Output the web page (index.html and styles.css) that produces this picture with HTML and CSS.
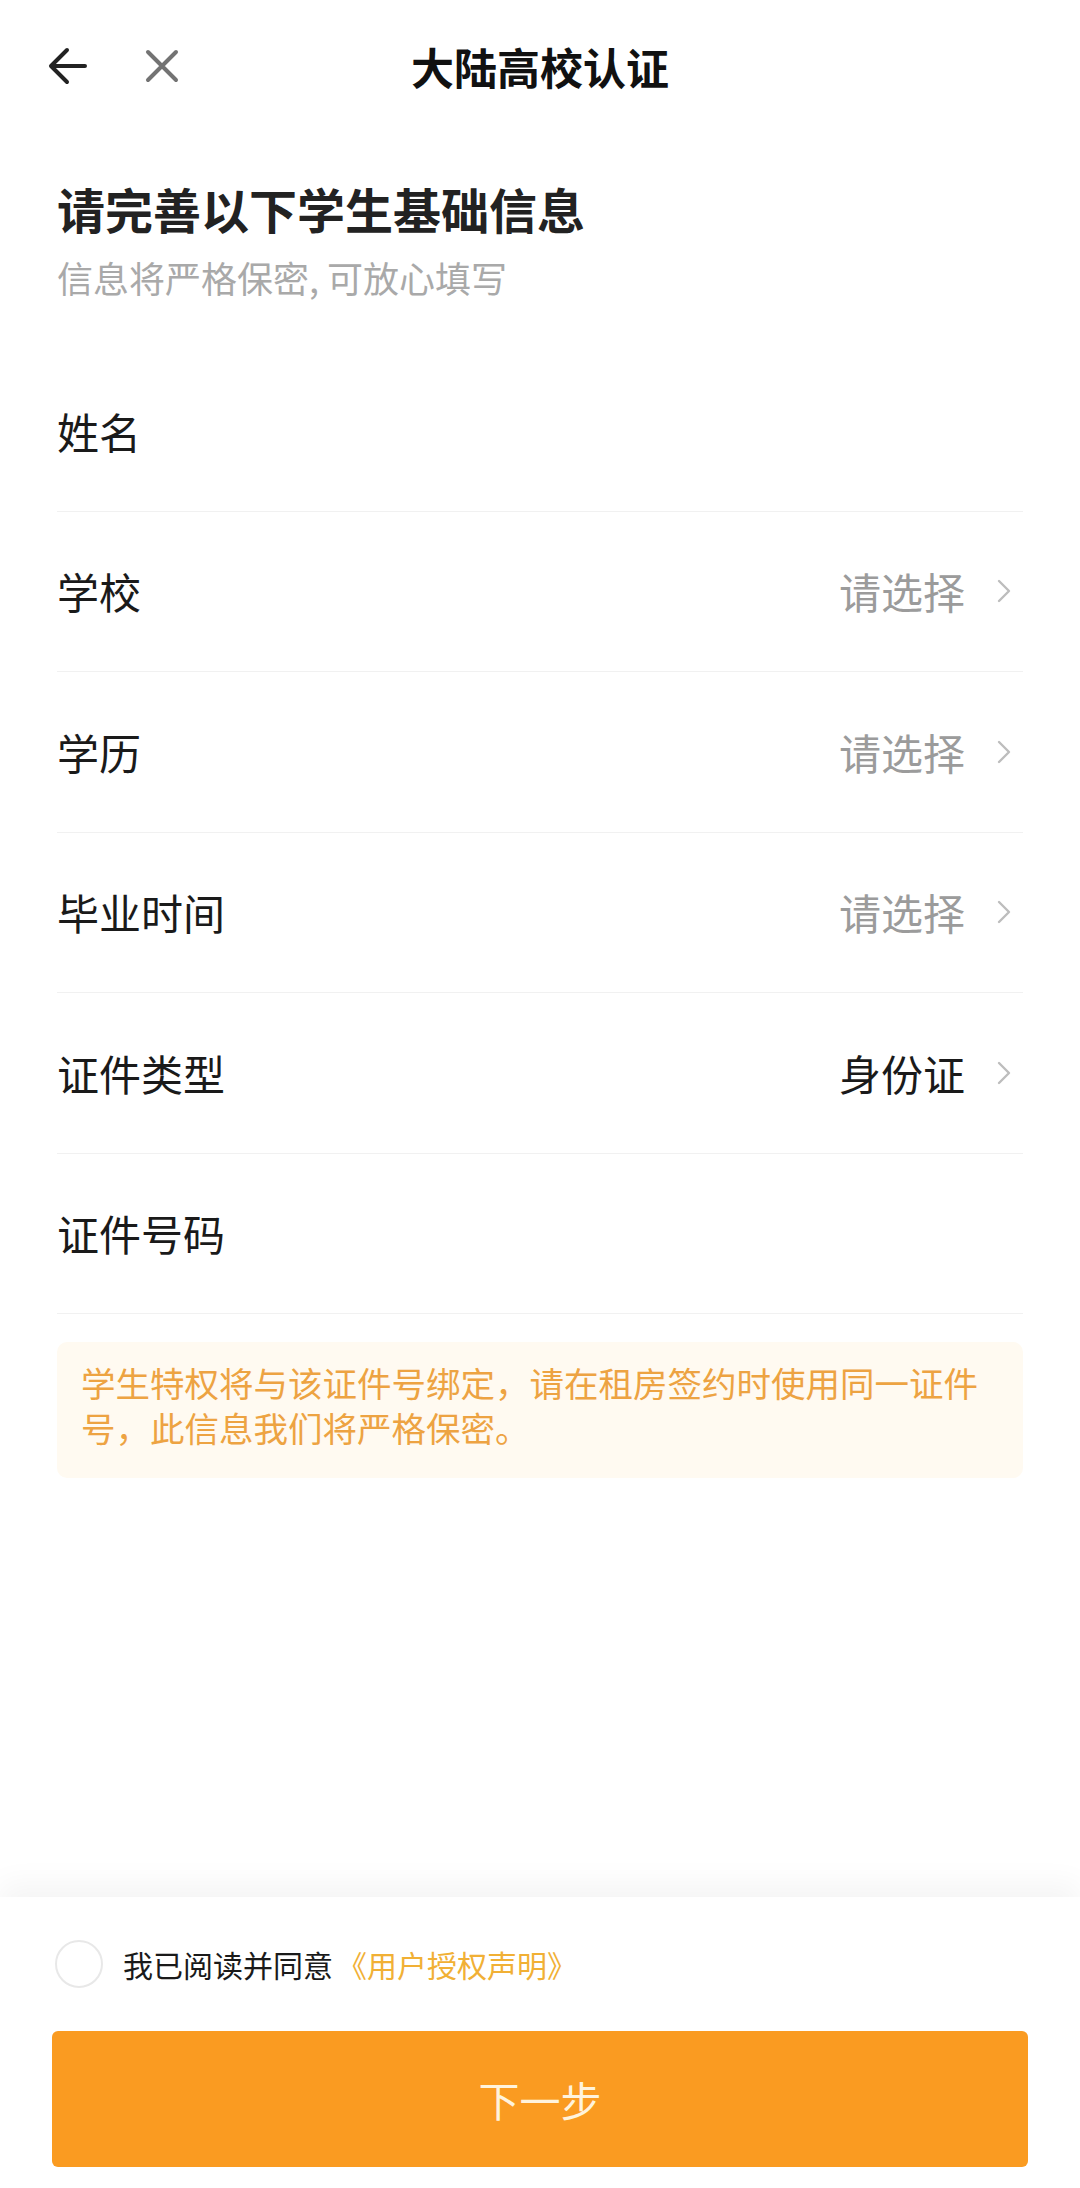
FILE: index.html
```html
<!DOCTYPE html>
<html lang="zh-CN">
<head>
    <meta charset="UTF-8">
    <meta name="viewport" content="width=device-width, initial-scale=1.0">
    <title>大陆高校认证</title>
    <link rel="stylesheet" href="styles.css">
</head>
<body>
    <!-- Top navigation -->
    <header class="nav-bar">
        <div class="nav-left">
            <button class="icon-button" aria-label="返回">
                <svg class="icon-back" viewBox="0 0 40 38" width="40" height="38">
                    <path d="M37 19H4M19 3L3 19l16 16" fill="none" stroke="#222" stroke-width="4" stroke-linecap="round" stroke-linejoin="round"/>
                </svg>
            </button>
            <button class="icon-button" aria-label="关闭">
                <svg class="icon-close" viewBox="0 0 34 34" width="34" height="34">
                    <path d="M3 3l28 28M31 3L3 31" fill="none" stroke="#737373" stroke-width="4" stroke-linecap="round"/>
                </svg>
            </button>
        </div>
        <h1 class="nav-title">大陆高校认证</h1>
        <div></div>
    </header>

    <main class="content">
        <div class="intro">
            <h2>请完善以下学生基础信息</h2>
            <p>信息将严格保密, 可放心填写</p>
        </div>

        <div class="form-list">
            <div class="form-row">
                <span class="row-label">姓名</span>
            </div>
            <div class="form-row">
                <span class="row-label">学校</span>
                <span class="row-value placeholder">请选择</span>
                <svg class="chevron" viewBox="0 0 14 24" width="14" height="24"><path d="M2 2l10 10L2 22" fill="none" stroke="#bdbdbd" stroke-width="2.4" stroke-linecap="round" stroke-linejoin="round"/></svg>
            </div>
            <div class="form-row">
                <span class="row-label">学历</span>
                <span class="row-value placeholder">请选择</span>
                <svg class="chevron" viewBox="0 0 14 24" width="14" height="24"><path d="M2 2l10 10L2 22" fill="none" stroke="#bdbdbd" stroke-width="2.4" stroke-linecap="round" stroke-linejoin="round"/></svg>
            </div>
            <div class="form-row">
                <span class="row-label">毕业时间</span>
                <span class="row-value placeholder">请选择</span>
                <svg class="chevron" viewBox="0 0 14 24" width="14" height="24"><path d="M2 2l10 10L2 22" fill="none" stroke="#bdbdbd" stroke-width="2.4" stroke-linecap="round" stroke-linejoin="round"/></svg>
            </div>
            <div class="form-row">
                <span class="row-label">证件类型</span>
                <span class="row-value">身份证</span>
                <svg class="chevron" viewBox="0 0 14 24" width="14" height="24"><path d="M2 2l10 10L2 22" fill="none" stroke="#bdbdbd" stroke-width="2.4" stroke-linecap="round" stroke-linejoin="round"/></svg>
            </div>
            <div class="form-row">
                <span class="row-label">证件号码</span>
            </div>
        </div>

        <div class="notice">学生特权将与该证件号绑定，请在租房签约时使用同一证件号，此信息我们将严格保密。</div>
    </main>

    <!-- Bottom bar -->
    <footer class="footer">
        <label class="agree">
            <span class="check-circle"></span>
            <span>我已阅读并同意</span>
            <a class="agree-link" href="#">《用户授权声明》</a>
        </label>
        <button class="next-button">下一步</button>
    </footer>
</body>
</html>
```

FILE: styles.css
```css
body {
    font-family: "Noto Sans CJK SC", "Noto Sans", sans-serif;
    margin: 0;
    padding: 0;
    background: #fff;
    color: #1a1a1a;
    display: flex;
    flex-direction: column;
    height: 100vh;
}
.nav-bar {
    display: grid;
    grid-template-columns: 1fr auto 1fr;
    align-items: center;
    height: 132px;
}
.nav-left {
    display: flex;
    align-items: center;
    gap: 57px;
    padding-left: 48px;
}
.icon-button {
    background: none;
    border: none;
    padding: 0;
    display: flex;
    cursor: pointer;
}
.nav-title {
    margin: 0;
    font-size: 43px;
    font-weight: bold;
    line-height: 60px;
    color: #111;
}
.content {
    padding: 0 57px;
}
.intro h2 {
    margin: 46px 0 0;
    font-size: 48px;
    font-weight: bold;
    line-height: 60px;
    color: #222;
}
.intro p {
    margin: 14px 0 0;
    font-size: 36px;
    line-height: 50px;
    color: #a9a9a9;
}
.form-list {
    margin-top: 49px;
}
.form-row {
    display: flex;
    align-items: center;
    height: 159.5px;
    border-bottom: 1px solid #f1f1f1;
}
.row-label {
    flex: 1;
    font-size: 42px;
    line-height: 56px;
}
.row-value {
    font-size: 42px;
    line-height: 56px;
    color: #1a1a1a;
}
.row-value.placeholder {
    color: #9b9b9b;
}
.chevron {
    margin: 0 12px 0 32px;
}
.notice {
    margin-top: 28px;
    padding: 18px 24px 28px;
    background: #fffaf1;
    border-radius: 10px;
    font-size: 34.5px;
    line-height: 45px;
    color: #eda342;
}
.footer {
    margin-top: auto;
    height: 291px;
    box-sizing: border-box;
    padding: 44px 52px 20px;
    background: #fff;
    box-shadow: 0 -14px 28px rgba(0, 0, 0, 0.045);
}
.agree {
    display: flex;
    align-items: center;
    height: 46px;
    font-size: 30px;
    color: #1a1a1a;
}
.check-circle {
    width: 44px;
    height: 44px;
    border: 2px solid #e8e8e8;
    border-radius: 50%;
    margin: 0 20px 0 3px;
}
.agree-link {
    color: #f1b035;
    text-decoration: none;
    margin-left: 4px;
}
.next-button {
    display: block;
    width: 100%;
    height: 136px;
    margin-top: 44px;
    background-color: #fa9b21;
    color: #fff3dc;
    border: none;
    border-radius: 6px;
    font-family: inherit;
    font-size: 41px;
    cursor: pointer;
}
```
